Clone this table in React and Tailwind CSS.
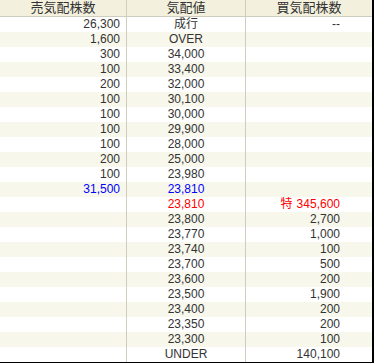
import React from 'react';

const rows = [
  { sell: '26,300', price: '成行', buy: '--' },
  { sell: '1,600', price: 'OVER', buy: '' },
  { sell: '300', price: '34,000', buy: '' },
  { sell: '100', price: '33,400', buy: '' },
  { sell: '200', price: '32,000', buy: '' },
  { sell: '100', price: '30,100', buy: '' },
  { sell: '100', price: '30,000', buy: '' },
  { sell: '100', price: '29,900', buy: '' },
  { sell: '100', price: '28,000', buy: '' },
  { sell: '200', price: '25,000', buy: '' },
  { sell: '100', price: '23,980', buy: '' },
  { sell: '31,500', price: '23,810', buy: '', tone: 'blue' },
  { sell: '', price: '23,810', buy: '345,600', tone: 'red', special: true },
  { sell: '', price: '23,800', buy: '2,700' },
  { sell: '', price: '23,770', buy: '1,000' },
  { sell: '', price: '23,740', buy: '100' },
  { sell: '', price: '23,700', buy: '500' },
  { sell: '', price: '23,600', buy: '200' },
  { sell: '', price: '23,500', buy: '1,900' },
  { sell: '', price: '23,400', buy: '200' },
  { sell: '', price: '23,350', buy: '200' },
  { sell: '', price: '23,300', buy: '100' },
  { sell: '', price: 'UNDER', buy: '140,100' },
];

export default function App() {
  return (
    <div className="w-[374px] h-[363px] bg-white border-r-2 border-b-2 border-black text-[12px] leading-[15px] text-[#333] font-['Liberation_Sans','Noto_Sans_CJK_JP',sans-serif]">
      <div className="grid grid-cols-[126px_1px_118px_1px_126px] h-[17px] bg-[#f3f1de] border-b border-[#cfcdbd] text-[13px] leading-[16px]">
        <div className="text-center">売気配株数</div>
        <div className="bg-[#cfcdbd]" />
        <div className="text-center">気配値</div>
        <div className="bg-[#cfcdbd]" />
        <div className="text-center">買気配株数</div>
      </div>
      {rows.map((r, i) => {
        const color =
          r.tone === 'blue' ? 'text-[#0000ff]' : r.tone === 'red' ? 'text-[#ff0000]' : '';
        return (
          <div
            key={i}
            className={`grid grid-cols-[126px_1px_118px_1px_126px] h-[15px] ${
              i % 2 === 1 ? 'bg-[#f7f7ec]' : 'bg-white'
            }`}
          >
            <div className={`text-right pr-[6px] ${color}`}>{r.sell}</div>
            <div className="bg-[#cfcdbd]" />
            <div className={`text-center ${color}`}>{r.price}</div>
            <div className="bg-[#cfcdbd]" />
            <div className={`text-right pr-[32px] ${color}`}>
              {r.special && <span className="mr-[4px]">特</span>}
              {r.buy}
            </div>
          </div>
        );
      })}
    </div>
  );
}
